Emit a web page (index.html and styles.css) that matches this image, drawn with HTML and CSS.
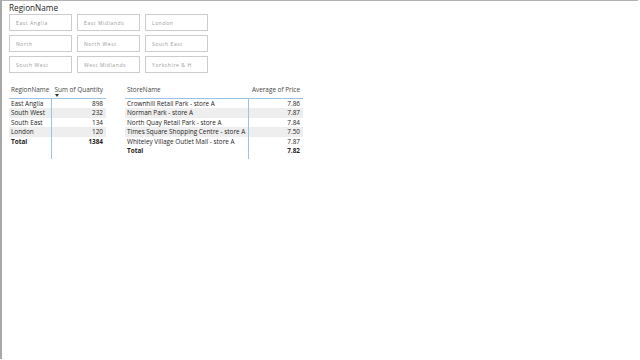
FILE: index.html
```html
<!DOCTYPE html>
<html lang="en">

<head>
    <meta charset="UTF-8">
    <meta name="viewport" content="width=device-width, initial-scale=1.0">
    <link rel="stylesheet" href="styles.css">
    <title>Report</title>
</head>

<body>
    <div id="page">
        <div class="slicer">
            <div class="slicerTitle">RegionName</div>
            <div class="slicerGrid">
                <div class="slicerItem"><span>East Anglia</span></div>
                <div class="slicerItem"><span>East Midlands</span></div>
                <div class="slicerItem"><span>London</span></div>
                <div class="slicerItem"><span>North</span></div>
                <div class="slicerItem"><span>North West</span></div>
                <div class="slicerItem"><span>South East</span></div>
                <div class="slicerItem"><span>South West</span></div>
                <div class="slicerItem"><span>West Midlands</span></div>
                <div class="slicerItem"><span>Yorkshire &amp; H</span></div>
            </div>
        </div>

        <div class="tables">
            <div class="matrix regionTable">
                <div class="row head">
                    <div class="cell first">RegionName</div>
                    <div class="cell num sorted">Sum of Quantity<span class="sortArrow"></span></div>
                </div>
                <div class="row"><div class="cell first">East Anglia</div><div class="cell num">898</div></div>
                <div class="row alt"><div class="cell first">South West</div><div class="cell num">232</div></div>
                <div class="row"><div class="cell first">South East</div><div class="cell num">134</div></div>
                <div class="row alt"><div class="cell first">London</div><div class="cell num">120</div></div>
                <div class="row total"><div class="cell first">Total</div><div class="cell num">1384</div></div>
                <div class="row filler"><div class="cell first"></div><div class="cell"></div></div>
            </div>

            <div class="matrix storeTable">
                <div class="row head">
                    <div class="cell first">StoreName</div>
                    <div class="cell num">Average of Price</div>
                </div>
                <div class="row"><div class="cell first">Crownhill Retail Park - store A</div><div class="cell num">7.86</div></div>
                <div class="row alt"><div class="cell first">Norman Park - store A</div><div class="cell num">7.87</div></div>
                <div class="row"><div class="cell first">North Quay Retail Park - store A</div><div class="cell num">7.84</div></div>
                <div class="row alt"><div class="cell first">Times Square Shopping Centre - store A</div><div class="cell num">7.50</div></div>
                <div class="row"><div class="cell first">Whiteley Village Outlet Mall - store A</div><div class="cell num">7.87</div></div>
                <div class="row total"><div class="cell first">Total</div><div class="cell num">7.82</div></div>
                <div class="row filler short"><div class="cell first"></div><div class="cell"></div></div>
            </div>
        </div>
    </div>
</body>

</html>
```

FILE: styles.css
```css
body {
    margin: 0;
    background-color: white;
    font-family: "Open Sans", "Noto Sans", sans-serif;
    color: #252423;
}

#page {
    width: 638px;
    height: 359px;
    border-left: 2px solid #a8a8a8;
    border-top: 1px solid #b0b0b0;
    padding: 0 0 0 7px;
    box-sizing: border-box;
    overflow: hidden;
}

.slicerTitle {
    font-size: 8.2px;
    line-height: 11px;
    padding-top: 1px;
    color: #252423;
}

.slicerGrid {
    display: grid;
    grid-template-columns: 63px 63px 63px;
    grid-auto-rows: 17px;
    column-gap: 5px;
    row-gap: 4px;
    margin-top: 1px;
}

.slicerItem {
    border: 1px solid #cccccc;
    display: flex;
    align-items: center;
    padding-left: 6px;
    overflow: hidden;
}

.slicerItem span {
    font-size: 5px;
    letter-spacing: 0.6px;
    color: #999999;
    white-space: nowrap;
}

.tables {
    display: flex;
    gap: 19px;
    margin-top: 10px;
}

.matrix {
    font-size: 6.4px;
    display: flex;
    flex-direction: column;
}

.regionTable {
    width: 97px;
}

.regionTable .first {
    width: 43px;
}

.storeTable {
    width: 178px;
}

.storeTable .first {
    width: 124px;
}

.row {
    display: flex;
    height: 9.5px;
    line-height: 9.5px;
}

.cell {
    padding: 0 3px 0 2px;
    white-space: nowrap;
    box-sizing: border-box;
}

.cell.first {
    flex: none;
    border-right: 1px solid #9cc3e3;
}

.cell.num {
    flex: 1;
    text-align: right;
}

.row.head {
    height: 14.5px;
    line-height: 13px;
    color: #444;
    border-bottom: 1px solid #9cc3e3;
}

.row.head .cell.first {
    border-right: none;
}

.row.alt {
    background-color: #eeeeee;
}

.row.total {
    font-weight: bold;
}

.row.filler {
    height: 12.5px;
}

.row.filler.short {
    height: 3.5px;
}

.sorted {
    position: relative;
}

.sortArrow {
    position: absolute;
    left: 3px;
    bottom: 1px;
    width: 0;
    height: 0;
    border-left: 2px solid transparent;
    border-right: 2px solid transparent;
    border-top: 3px solid #333;
}
```
